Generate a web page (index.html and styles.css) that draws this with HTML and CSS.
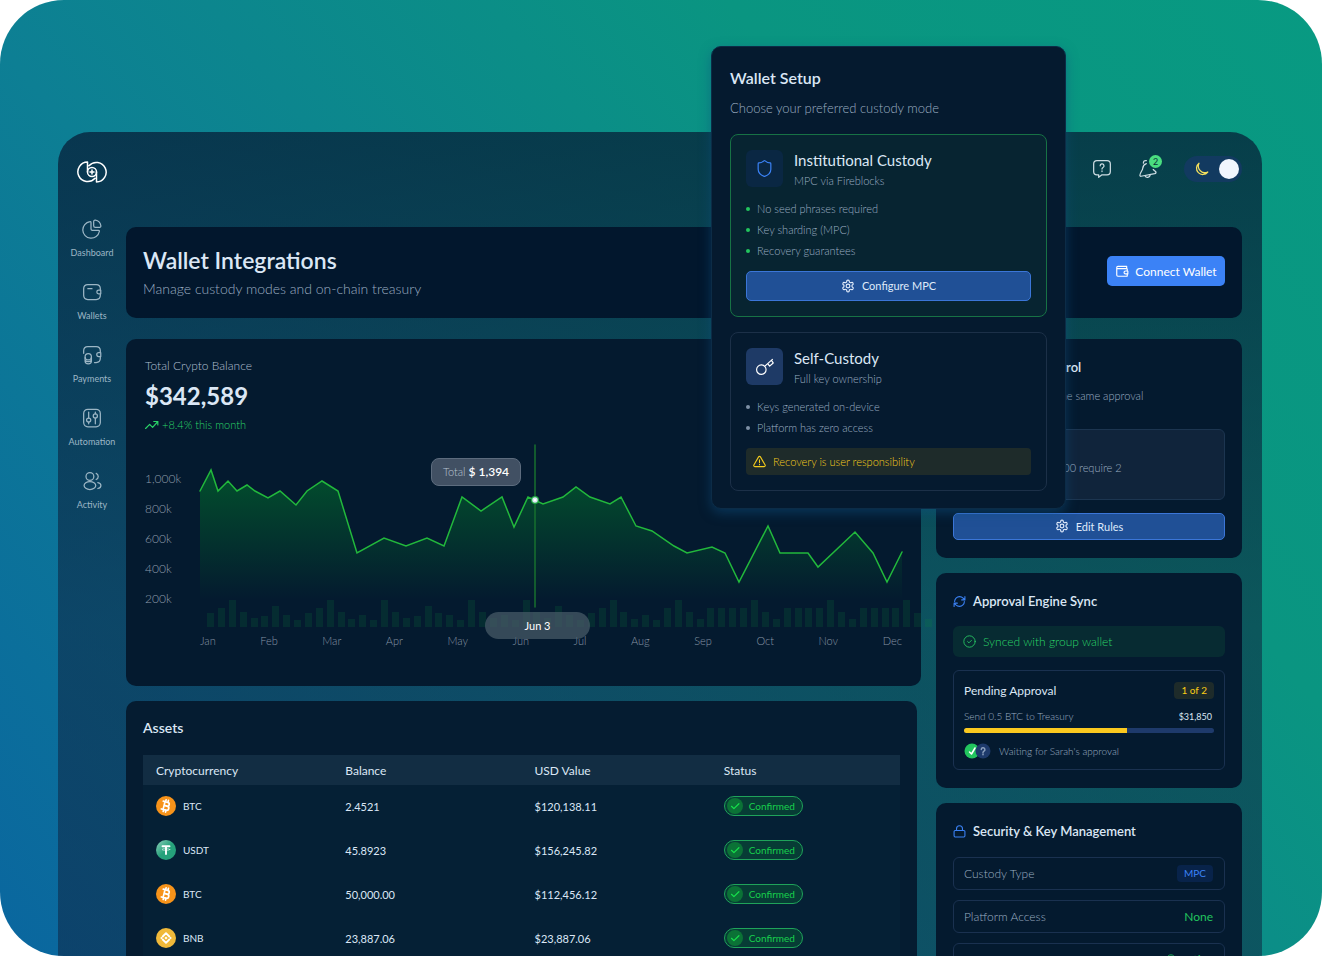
FILE: index.html
```html
<!DOCTYPE html>
<html lang="en">
<head>
    <meta charset="utf-8">
    <title>Wallet Integrations</title>
    <link rel="stylesheet" href="styles.css">
</head>
<body>
    <!-- shared icons -->
    <svg class="sprite" aria-hidden="true">
        <symbol id="gear" viewBox="0 0 24 24">
            <path d="M12.2 2h-.4a2 2 0 0 0-2 2v.2a2 2 0 0 1-1 1.7l-.4.3a2 2 0 0 1-2 0l-.2-.1a2 2 0 0 0-2.7.7l-.2.4a2 2 0 0 0 .7 2.7l.2.1a2 2 0 0 1 1 1.7v.5a2 2 0 0 1-1 1.8l-.2.1a2 2 0 0 0-.7 2.7l.2.4a2 2 0 0 0 2.7.7l.2-.1a2 2 0 0 1 2 0l.4.3a2 2 0 0 1 1 1.7v.2a2 2 0 0 0 2 2h.4a2 2 0 0 0 2-2v-.2a2 2 0 0 1 1-1.7l.4-.3a2 2 0 0 1 2 0l.2.1a2 2 0 0 0 2.7-.7l.2-.4a2 2 0 0 0-.7-2.7l-.2-.1a2 2 0 0 1-1-1.8v-.5a2 2 0 0 1 1-1.7l.2-.1a2 2 0 0 0 .7-2.7l-.2-.4a2 2 0 0 0-2.7-.7l-.2.1a2 2 0 0 1-2 0l-.4-.3a2 2 0 0 1-1-1.7V4a2 2 0 0 0-2-2z"/>
            <circle cx="12" cy="12" r="3.2"/>
        </symbol>
        <symbol id="shield" viewBox="0 0 24 24">
            <path d="M20 13c0 5-3.500 7.500-7.700 9a1 1 0 0 1-.6 0C7.500 20.500 4 18 4 13V6a1 1 0 0 1 1-1c2 0 4.500-1.200 6.200-2.700a1.200 1.200 0 0 1 1.600 0C14.500 3.800 17 5 19 5a1 1 0 0 1 1 1z"/>
        </symbol>
        <symbol id="btc" viewBox="0 0 20 20">
            <circle cx="10" cy="10" r="10" fill="#f7931a"/>
            <g transform="rotate(14 10 10)" fill="none" stroke="#fff" stroke-width="1.700">
                <path d="M6.200 6h4.600a1.950 1.950 0 0 1 0 3.900H8h3.200a2.050 2.050 0 0 1 0 4.100h-5M8 6v8M8.600 6V4M11 6V4M8.600 14v2M11 14v2"/>
            </g>
        </symbol>
        <symbol id="usdt" viewBox="0 0 20 20">
            <circle cx="10" cy="10" r="10" fill="url(#tetherFill)"/>
            <path d="M6.500 6.300h7M10 6.300V14" fill="none" stroke="#fff" stroke-width="1.900"/>
            <ellipse cx="10" cy="9.500" rx="4" ry=".9" fill="none" stroke="#fff" stroke-width=".5"/>
        </symbol>
        <symbol id="bnb" viewBox="0 0 20 20">
            <circle cx="10" cy="10" r="10" fill="#f0b93a"/>
            <path d="M6.700 8.500 10 5.200l3.300 3.300M6.700 11.500l3.300 3.300 3.300-3.300" fill="none" stroke="#fff" stroke-width="1.800"/>
            <path d="m10 8.400 1.600 1.600-1.600 1.600L8.400 10zM5.400 8.800 6.600 10l-1.200 1.200L4.200 10zM14.600 8.800l1.200 1.200-1.200 1.200-1.200-1.200z" fill="#fff"/>
        </symbol>
        <symbol id="tick" viewBox="0 0 16 16">
            <circle cx="8" cy="8" r="8" fill="#0b7236"/>
            <path d="m4.500 8.300 2.400 2.300 5-4.900" fill="none" stroke="#17e04c" stroke-width="1.200"/>
        </symbol>
        <defs>
            <linearGradient id="tetherFill" x1="0" y1="0" x2="1" y2="1">
                <stop offset="0" stop-color="#8fd0bc"/>
                <stop offset=".5" stop-color="#26a17b"/>
            </linearGradient>
        </defs>
    </svg>

    <div class="stage">
        <div class="window">
            <!-- sidebar -->
            <nav class="sidebar">
                <a class="logo" href="#" aria-label="Home">
                    <svg viewBox="0 0 30 22">
                        <path d="M10.500 1A9.800 9.800 0 1 0 18 17.300M10.500 1v10M19.500 21A9.800 9.800 0 1 0 12 4.700M19.500 21V11"/>
                        <circle cx="15" cy="11" r="4.500"/>
                        <path d="M15 9v4M13 11h4"/>
                    </svg>
                </a>
                <a class="nav-item" href="#">
                    <svg viewBox="0 0 24 24"><path d="M9.500 3.200A10 10 0 1 0 20.800 15c.3-.9-.2-1.400-1-1.400h-7.300c-1 0-1.700-.7-1.700-1.700V4.400c0-.9-.5-1.400-1.300-1.200z"/><path d="M14 3v5c0 1.300.7 2 2 2h5c1.200 0 1.800-.8 1.600-2A8 8 0 0 0 16 1.400c-1.200-.2-2 .4-2 1.600z"/></svg>
                    Dashboard
                </a>
                <a class="nav-item" href="#">
                    <svg viewBox="0 0 24 24"><path d="M22 9V8c0-3-2-5-5-5H7C4 3 2 5 2 8v8c0 3 2 5 5 5h10c3 0 5-2 5-5v-1M7 8h5M22.500 9.800H20a2.200 2.200 0 0 0 0 4.400h2.500z"/></svg>
                    Wallets
                </a>
                <a class="nav-item" href="#">
                    <svg viewBox="0 0 24 24"><path d="M22 9V7c0-3-2-5-5-5H7C4 2 2 4 2 7v3M22 14v2c0 3-2 5-5 5h-2M22.500 9.200H20a2.200 2.200 0 0 0 0 4.600h2.500z"/><circle cx="7.500" cy="14" r="3.800"/><path d="M3.700 15v4.500c0 1.700 1.700 3 3.800 3s3.800-1.300 3.800-3V15M4 18.500c1.500 2 5.500 2 7 0"/></svg>
                    Payments
                </a>
                <a class="nav-item" href="#">
                    <svg viewBox="0 0 24 24"><rect x="2" y="1.500" width="20" height="21" rx="5"/><path d="M8 5v7M8 17v2M16 5v2M16 12v7"/><circle cx="8" cy="14.500" r="2.500"/><circle cx="16" cy="9.500" r="2.500"/></svg>
                    Automation
                </a>
                <a class="nav-item" href="#">
                    <svg viewBox="0 0 24 24"><circle cx="9.500" cy="6.500" r="4.700"/><ellipse cx="9.500" cy="17.500" rx="7" ry="4.700"/><path d="M17 2.800a4 4 0 0 1 0 7.400M19 14c2.200.4 3.700 1.800 3.700 3.400S21.200 20.600 19 21"/></svg>
                    Activity
                </a>
            </nav>

            <main class="main">
                <!-- top bar -->
                <header class="topbar">
                    <button class="icon-button" aria-label="Help">
                        <svg viewBox="0 0 24 24"><path d="M6 2h12a4 4 0 0 1 4 4v9a4 4 0 0 1-4 4h-6l-4 3v-3H6a4 4 0 0 1-4-4V6a4 4 0 0 1 4-4z"/><path d="M9.800 8.200a2.300 2.300 0 1 1 3.400 2c-.8.5-1.200.9-1.200 1.800M12 14.300v.7"/></svg>
                    </button>
                    <button class="icon-button" aria-label="Notifications">
                        <svg viewBox="0 0 24 24"><path d="M10 5.500c-2.700.8-4 3-4.300 5.500-.2 3-3 4.500-3.400 8.500 0 1 .5 1.300 1.400 1.200L20 17.500c1.500-.4 2-1.300 1.300-2.200-1-1.200-2.300-1.500-3-2.800M6.500 5c-.3-2.300 1.500-3.500 3.500-3M8.500 20c1.200 3 5.800 2.500 6.300-1.200"/></svg>
                        <span class="badge">2</span>
                    </button>
                    <label class="theme-switch">
                        <input type="checkbox" checked aria-label="Dark theme">
                        <svg viewBox="0 0 24 24"><path d="M8 2A10 10 0 1 0 22 16 10.500 10.500 0 0 1 8 2z"/></svg>
                        <span class="knob"></span>
                    </label>
                </header>

                <section class="card page-head">
                    <div>
                        <h1>Wallet Integrations</h1>
                        <p>Manage custody modes and on-chain treasury</p>
                    </div>
                    <button class="connect">
                        <svg viewBox="0 0 24 24"><path d="M20 8V4H5a2 2 0 0 0-2 2v13a2 2 0 0 0 2 2h15a1 1 0 0 0 1-1v-3M3 7a1 1 0 0 0 1 1h16a1 1 0 0 1 1 1v3M22 12h-4a2.500 2.500 0 0 0 0 5h4z"/></svg>
                        Connect Wallet
                    </button>
                </section>

                <div class="columns">
                    <div class="left">
                        <!-- balance chart -->
                        <section class="card balance">
                            <p class="balance-label">Total Crypto Balance</p>
                            <p class="balance-value">$342,589</p>
                            <p class="balance-change">
                                <svg viewBox="0 0 24 16"><path d="m1 14 7-7 5 5 9-10M15 2h7v6"/></svg>
                                +8.4% this month
                            </p>
                            <div class="chart">
                                <div class="y-axis">
                                    <span>1,000k</span>
                                    <span>800k</span>
                                    <span>600k</span>
                                    <span>400k</span>
                                    <span>200k</span>
                                </div>
                                <div class="plot">
                                    <svg class="graph" viewBox="0 0 702 187" preserveAspectRatio="none">
                                        <defs>
                                            <linearGradient id="area" x1="0" y1="0" x2="0" y2="1">
                                                <stop offset="0" stop-color="#00852a" stop-opacity=".5"/>
                                                <stop offset="1" stop-color="#00852a" stop-opacity="0"/>
                                            </linearGradient>
                                        </defs>
                                        <path class="area" id="fill"/>
                                        <path class="line" id="line"/>
                                        <g class="bars" id="bars"></g>
                                        <path class="cursor" d="M335 5v162"/>
                                        <circle class="halo" cx="335" cy="60" r="4"/>
                                        <circle cx="335" cy="60" r="2" fill="#fff"/>
                                    </svg>
                                    <div class="total-tip">Total <b>$ 1,394</b></div>
                                    <div class="date-tip">Jun 3</div>
                                    <div class="x-axis">
                                        <span>Jan</span><span>Feb</span><span>Mar</span><span>Apr</span><span>May</span><span>Jun</span><span>Jul</span><span>Aug</span><span>Sep</span><span>Oct</span><span>Nov</span><span>Dec</span>
                                    </div>
                                </div>
                            </div>
                        </section>

                        <!-- assets -->
                        <section class="card assets">
                            <h2>Assets</h2>
                            <table>
                                <thead>
                                    <tr><th>Cryptocurrency</th><th>Balance</th><th>USD Value</th><th>Status</th></tr>
                                </thead>
                                <tbody>
                                    <tr>
                                        <td><span class="coin"><svg><use href="#btc"/></svg>BTC</span></td>
                                        <td>2.4521</td><td>$120,138.11</td>
                                        <td><span class="status"><svg><use href="#tick"/></svg>Confirmed</span></td>
                                    </tr>
                                    <tr>
                                        <td><span class="coin"><svg><use href="#usdt"/></svg>USDT</span></td>
                                        <td>45.8923</td><td>$156,245.82</td>
                                        <td><span class="status"><svg><use href="#tick"/></svg>Confirmed</span></td>
                                    </tr>
                                    <tr>
                                        <td><span class="coin"><svg><use href="#btc"/></svg>BTC</span></td>
                                        <td>50,000.00</td><td>$112,456.12</td>
                                        <td><span class="status"><svg><use href="#tick"/></svg>Confirmed</span></td>
                                    </tr>
                                    <tr>
                                        <td><span class="coin"><svg><use href="#bnb"/></svg>BNB</span></td>
                                        <td>23,887.06</td><td>$23,887.06</td>
                                        <td><span class="status"><svg><use href="#tick"/></svg>Confirmed</span></td>
                                    </tr>
                                </tbody>
                            </table>
                        </section>
                    </div>

                    <div class="right">
                        <section class="card side control">
                            <h2><svg viewBox="0 0 24 24"><use href="#shield"/></svg>Multi-User Control</h2>
                            <p class="control-text">New wallets here use the same approval</p>
                            <div class="rule">Transfers over $10,000 require 2</div>
                            <button class="action"><svg><use href="#gear"/></svg>Edit Rules</button>
                        </section>

                        <section class="card side">
                            <h2><svg viewBox="0 0 24 24"><path d="M3 12a9 9 0 0 1 9-9 9.800 9.800 0 0 1 6.700 2.700L22 9M22 3v6h-6M21 12a9 9 0 0 1-9 9 9.800 9.800 0 0 1-6.700-2.700L2 15M8 15H2v6"/></svg>Approval Engine Sync</h2>
                            <p class="synced">
                                <svg viewBox="0 0 24 24"><circle cx="12" cy="12" r="10.500"/><path d="m8.500 12 2.500 2.500 4.500-4.500"/></svg>
                                Synced with group wallet
                            </p>
                            <div class="pending">
                                <div class="row"><span class="pending-title">Pending Approval</span><span class="tag yellow">1 of 2</span></div>
                                <div class="row small"><span>Send 0.5 BTC to Treasury</span><span class="amount">$31,850</span></div>
                                <div class="progress"><div class="progress-value"></div></div>
                                <div class="waiting">
                                    <svg viewBox="0 0 27 16"><circle cx="8" cy="8" r="7.500" fill="#22c55e"/><circle cx="19" cy="8" r="7.500" fill="#1e3a6b"/><path d="m5.500 9 2 2 3.500-6" stroke="#fff" stroke-width="1.500"/><path d="M17.300 6.600a1.800 1.800 0 1 1 2.700 1.500c-.7.4-1 .7-1 1.400M19 11v.8" stroke="#8ca0bd"/></svg>
                                    Waiting for Sarah's approval
                                </div>
                            </div>
                        </section>

                        <section class="card side">
                            <h2><svg viewBox="0 0 24 24"><rect x="2" y="10" width="20" height="12" rx="2"/><path d="M6.500 10V7a5.500 5.500 0 0 1 11 0v3"/></svg>Security &amp; Key Management</h2>
                            <div class="setting"><span>Custody Type</span><span class="tag blue">MPC</span></div>
                            <div class="setting"><span>Platform Access</span><span class="green">None</span></div>
                            <div class="setting"><span>Recovery Status</span><span class="green"><svg viewBox="0 0 24 24"><circle cx="12" cy="12" r="10"/><path d="m8 12 3 3 5-5"/></svg>Active</span></div>
                        </section>
                    </div>
                </div>
            </main>
        </div>

        <!-- wallet setup dialog -->
        <section class="dialog" role="dialog" aria-label="Wallet Setup">
            <h2>Wallet Setup</h2>
            <p class="dialog-text">Choose your preferred custody mode</p>

            <div class="option institutional">
                <div class="option-head">
                    <span class="option-icon"><svg><use href="#shield"/></svg></span>
                    <div><h3>Institutional Custody</h3><p>MPC via Fireblocks</p></div>
                </div>
                <ul>
                    <li>No seed phrases required</li>
                    <li>Key sharding (MPC)</li>
                    <li>Recovery guarantees</li>
                </ul>
                <button class="action"><svg><use href="#gear"/></svg>Configure MPC</button>
            </div>

            <div class="option self">
                <div class="option-head">
                    <span class="option-icon"><svg viewBox="0 0 24 24"><circle cx="8" cy="16" r="6"/><path d="M12.500 11.500 22 3M16 8.500l2.500 3 4.500-4-2-3"/></svg></span>
                    <div><h3>Self-Custody</h3><p>Full key ownership</p></div>
                </div>
                <ul>
                    <li>Keys generated on-device</li>
                    <li>Platform has zero access</li>
                </ul>
                <p class="warning">
                    <svg viewBox="0 0 24 24"><path d="M10.300 3.500 1.600 18.500A2 2 0 0 0 3.300 21.500h17.400a2 2 0 0 0 1.700-3L13.700 3.500a2 2 0 0 0-3.400 0zM12 9v5M12 17v1"/></svg>
                    Recovery is user responsibility
                </p>
            </div>
        </section>
    </div>

    <script>
    // Balance over the year, as x,y pairs in the graph
    let points = [
        [0,51],[11,30],[18,51],[28,41],[37,51],[47,45],[55,51],[68,58],[80,51],[96,65],
        [107,51],[122,41],[138,51],[157,113],[184,98],[206,106],[227,98],[244,106],
        [262,57],[281,71],[302,57],[314,87],[328,57],[343,64],[363,57],[376,47],[390,57],
        [410,64],[421,57],[436,86],[452,91],[474,106],[487,113],[512,107],[525,113],
        [539,142],[568,86],[580,113],[608,113],[618,127],[655,92],[673,113],[687,142],[702,112]
    ];
    // Heights of the volume bars
    let volumes = [
        14,19,27,15,9,11,21,12,7,14,19,27,15,8,12,7,27,15,9,11,21,14,12,7,27,15,9,
        12,7,27,15,9,21,12,7,14,19,27,15,8,12,7,19,27,15,8,19,19,19,19,27,15,8,
        19,19,19,19,27,15,8,19,19,19,19,27,14,8
    ];

    let line = "M" + points.join("L");
    document.getElementById("line").setAttribute("d", line);
    document.getElementById("fill").setAttribute("d", line + "V160H0Z");

    let bars = "";
    volumes.forEach(function (h, i) {
        bars += '<rect x="' + Math.round(7 + i * 10.880) + '" y="' + (187 - h) + '" width="7" height="' + h + '"/>';
    });
    document.getElementById("bars").innerHTML = bars;
    </script>
</body>
</html>
```

FILE: styles.css
```css
* {
    box-sizing: border-box;
}
body {
    margin: 0;
    background: #fff;
    font-family: Lato, "Liberation Sans", sans-serif;
    font-size: 12px;
    font-weight: 300;
    color: #dbe7f5;
}
h1, h2, h3, p, ul {
    margin: 0;
    padding: 0;
}
h1, h2, h3 {
    font-weight: 600;
}
button {
    font: inherit;
    color: inherit;
    border: 0;
    padding: 0;
    background: none;
}
a {
    color: inherit;
    text-decoration: none;
}
svg {
    fill: none;
    stroke: currentColor;
    stroke-width: 1.5;
    stroke-linecap: round;
    stroke-linejoin: round;
    flex: none;
}
.sprite {
    position: absolute;
    width: 0;
    height: 0;
}

/* Page background and app window */
.stage {
    position: relative;
    height: 100vh;
    overflow: hidden;
    padding: 132px 60px 0 58px;
    border-radius: 64px;
    background: linear-gradient(50deg, #0a669f 0%, #0d7f94 36%, #0a9581 72%, #089a82 100%);
}
.window {
    display: flex;
    height: 100%;
    overflow: hidden;
    border-radius: 32px 32px 0 0;
    background: linear-gradient(180deg, rgba(6, 24, 50, .7), rgba(14, 30, 58, .52) 60%, rgba(14, 30, 58, .5));
}
.card {
    background: #041a2f;
    border-radius: 10px;
}

/* Sidebar */
.sidebar {
    display: flex;
    flex-direction: column;
    align-items: center;
    flex: none;
    width: 68px;
    padding-top: 29px;
}
.logo {
    height: 58px;
    color: #fff;
}
.logo svg {
    width: 30px;
    height: 22px;
}
.nav-item {
    display: flex;
    flex-direction: column;
    align-items: center;
    gap: 8px;
    height: 63px;
    font-size: 9px;
    line-height: 12px;
    font-weight: 400;
    color: #9cb6c5;
}
.nav-item svg {
    width: 20px;
    height: 20px;
}

/* Top bar */
.main {
    flex: 1;
    min-width: 0;
    padding-right: 20px;
}
.topbar {
    display: flex;
    justify-content: flex-end;
    align-items: center;
    gap: 26px;
    height: 95px;
    padding-bottom: 21px;
}
.icon-button {
    position: relative;
    width: 20px;
    height: 20px;
    color: #cddce2;
}
.icon-button svg {
    display: block;
    width: 20px;
    height: 20px;
}
.badge {
    position: absolute;
    top: -4px;
    right: -4px;
    width: 13px;
    height: 13px;
    border-radius: 50%;
    background: #4ade80;
    box-shadow: 0 0 0 1px #07404a;
    color: #06303a;
    font-size: 9px;
    line-height: 13px;
    font-weight: 400;
}
.theme-switch {
    display: flex;
    align-items: center;
    justify-content: space-between;
    width: 58px;
    height: 26px;
    padding: 0 3px 0 10px;
    border-radius: 13px;
    background: #123a60;
    color: #f5e05c;
}
.theme-switch input {
    position: absolute;
    opacity: 0;
}
.theme-switch svg {
    width: 15px;
    height: 15px;
    stroke-width: 2;
}
.knob {
    width: 20px;
    height: 20px;
    border-radius: 50%;
    background: #f1f6fe;
}

/* Page heading */
.page-head {
    display: flex;
    align-items: center;
    justify-content: space-between;
    height: 91px;
    padding: 0 17px 3px;
    background: #02172d;
}
.page-head h1 {
    font-size: 23px;
    line-height: 32px;
}
.page-head p {
    margin-top: 3px;
    font-size: 14px;
    line-height: 20px;
    color: #9badc1;
}
.connect {
    display: flex;
    align-items: center;
    justify-content: center;
    gap: 6px;
    width: 118px;
    height: 30px;
    border-radius: 5px;
    background: #3b82f6;
    font-weight: 400;
    color: #fff;
}
.connect svg {
    width: 14px;
    height: 14px;
    stroke-width: 2;
}

/* Columns */
.columns {
    display: grid;
    grid-template-columns: minmax(0, 1fr) 306px;
    gap: 15px;
    margin-top: 21px;
}
.left, .right {
    display: flex;
    flex-direction: column;
    gap: 15px;
}

/* Balance chart */
.balance {
    height: 347px;
    padding: 18px 19px 0 19px;
}
.balance-label {
    line-height: 18px;
    color: #b0bfd0;
}
.balance-value {
    margin-top: 5px;
    font-size: 24px;
    line-height: 32px;
    font-weight: 700;
}
.balance-change {
    display: flex;
    align-items: center;
    gap: 3px;
    margin-top: 5px;
    font-size: 11px;
    line-height: 16px;
    color: #2ad468;
}
.balance-change svg {
    width: 14px;
    height: 10px;
    stroke-width: 2;
}
.chart {
    display: flex;
    margin-top: 7px;
}
.y-axis {
    display: flex;
    flex-direction: column;
    gap: 14px;
    flex: none;
    width: 55px;
    padding-top: 31px;
    line-height: 16px;
    color: #8f9dab;
}
.plot {
    position: relative;
    flex: 1;
}
.graph {
    display: block;
    width: 100%;
    height: 187px;
    overflow: visible;
}
.area {
    fill: url(#area);
    stroke: none;
}
.line {
    stroke: #22b83c;
    stroke-linejoin: miter;
}
.bars {
    fill: #0a8a3a;
    fill-opacity: .17;
    stroke: none;
}
.cursor {
    stroke: #17702f;
}
.halo {
    fill: #22a845;
    stroke: none;
}
.total-tip, .date-tip {
    position: absolute;
    text-align: center;
}
.total-tip {
    top: 18px;
    left: 231px;
    width: 90px;
    border: 1px solid #5d6c7e;
    border-radius: 8px;
    background: rgba(72, 87, 105, .9);
    font-size: 11px;
    line-height: 26px;
    color: #b9c4d0;
}
.total-tip b {
    font-size: 12px;
    font-weight: 600;
    color: #fff;
}
.date-tip {
    top: 172px;
    left: 285px;
    width: 105px;
    border-radius: 14px;
    background: rgba(72, 92, 104, .72);
    font-size: 11px;
    line-height: 27px;
    font-weight: 400;
    color: #fff;
}
.x-axis {
    display: flex;
    justify-content: space-between;
    margin-top: 7px;
    font-size: 11px;
    line-height: 14px;
    color: #8594a4;
}

/* Assets */
.assets {
    margin-right: 4px;
    padding: 17px;
    background: #051c31;
}
.assets h2 {
    font-size: 14px;
    line-height: 20px;
}
table {
    width: 100%;
    margin-top: 17px;
    table-layout: fixed;
    border-collapse: collapse;
    background: #052035;
}
th, td {
    padding: 0 0 0 13px;
    text-align: left;
    font-weight: 400;
}
th {
    height: 30px;
    background: #122d43;
}
td {
    height: 44px;
    padding-bottom: 2px;
    font-size: 11px;
}
.coin {
    display: flex;
    align-items: center;
    gap: 7px;
    font-size: 10px;
}
.coin svg {
    width: 20px;
    height: 20px;
    stroke: none;
}
.status {
    display: flex;
    align-items: center;
    gap: 6px;
    width: 79px;
    height: 20px;
    padding-left: 2px;
    border: 1px solid #1fa35a;
    border-radius: 10px;
    background: #073c35;
    font-size: 10px;
    color: #17d04c;
}
.status svg {
    width: 16px;
    height: 16px;
    stroke: none;
}

/* Right column */
.side {
    padding: 18px 17px;
}
.side h2 {
    display: flex;
    align-items: center;
    gap: 7px;
    font-size: 13px;
    line-height: 20px;
}
.side h2 svg {
    width: 13px;
    height: 13px;
    stroke-width: 2;
    color: #3b82f6;
}
.control-text {
    margin-top: 11px;
    font-size: 11px;
    line-height: 16px;
    color: #9badc1;
}
.rule {
    height: 71px;
    margin: 25px 0 13px;
    padding: 30px 12px 0;
    border: 1px solid #1c3550;
    border-radius: 6px;
    background: #10243b;
    font-size: 11px;
    line-height: 16px;
    color: #9badc1;
}
.action {
    display: flex;
    align-items: center;
    justify-content: center;
    gap: 7px;
    width: 100%;
    height: 27px;
    padding-bottom: 1px;
    border: 1px solid #3b76d8;
    border-radius: 5px;
    background: #205096;
    font-size: 11px;
    font-weight: 400;
    color: #dfeafa;
}
.action svg {
    width: 14px;
    height: 14px;
    stroke-width: 2;
}
.synced {
    display: flex;
    align-items: center;
    gap: 7px;
    height: 31px;
    margin-top: 15px;
    padding: 0 0 1px 10px;
    border-radius: 6px;
    background: #072b32;
    color: #2ad468;
}
.synced svg {
    width: 13px;
    height: 13px;
}
.pending {
    margin-top: 13px;
    padding: 10px;
    border: 1px solid #1a3150;
    border-radius: 6px;
}
.row {
    display: flex;
    align-items: center;
    justify-content: space-between;
    height: 18px;
}
.pending-title {
    font-weight: 400;
}
.small {
    height: 16px;
    margin-top: 9px;
    padding-right: 2px;
    font-size: 10px;
    color: #9badc1;
}
.amount {
    font-size: 9px;
    font-weight: 400;
    color: #dbe7f5;
}
.tag {
    padding: 0 7px;
    border-radius: 4px;
    font-size: 10px;
    line-height: 17px;
    font-weight: 400;
}
.yellow {
    background: #1e2b2a;
    color: #facc15;
}
.blue {
    background: #08234a;
    color: #3b82f6;
}
.progress {
    height: 5px;
    margin-top: 4px;
    border-radius: 3px;
    background: #1e3a6b;
    overflow: hidden;
}
.progress-value {
    width: 65%;
    height: 100%;
    background: #fbc91f;
}
.waiting {
    display: flex;
    align-items: center;
    gap: 8px;
    height: 16px;
    margin-top: 10px;
    font-size: 10px;
    color: #9badc1;
}
.waiting svg {
    width: 27px;
    height: 16px;
    stroke: none;
}
.setting {
    display: flex;
    align-items: center;
    justify-content: space-between;
    height: 33px;
    margin-top: 10px;
    padding: 0 11px 1px 10px;
    border: 1px solid #1a3150;
    border-radius: 6px;
    color: #9badc1;
}
h2 + .setting {
    margin-top: 16px;
}
.green {
    font-weight: 400;
    color: #22c55e;
}
.green svg {
    width: 10px;
    height: 10px;
    margin-right: 4px;
    stroke-width: 2;
}

/* Wallet setup dialog */
.dialog {
    position: absolute;
    top: 46px;
    right: 256px;
    width: 355px;
    padding: 20px 18px 17px;
    border: 1px solid #0c2c47;
    border-radius: 10px;
    background: #051a2f;
    box-shadow: 0 4px 12px rgba(13, 79, 130, .5);
}
.dialog h2 {
    font-size: 16px;
    line-height: 22px;
}
.dialog-text {
    margin: 10px 0 17px;
    font-size: 13px;
    line-height: 18px;
    color: #9badc1;
}
.option {
    margin-top: 15px;
    padding: 15px;
    border: 1px solid #1c3048;
    border-radius: 8px;
}
.institutional {
    border-color: #177245;
    background: #072431;
}
.option-head {
    display: flex;
    gap: 11px;
}
.option-icon {
    display: flex;
    align-items: center;
    justify-content: center;
    width: 37px;
    height: 37px;
    border-radius: 6px;
    background: #0a2743;
    color: #3b82f6;
}
.option-icon svg {
    width: 19px;
    height: 19px;
}
.self .option-icon {
    background: #1e3a66;
    color: #fff;
}
.option h3 {
    font-size: 15px;
    line-height: 20px;
    font-weight: 400;
}
.option-head p {
    margin-top: 4px;
    font-size: 11px;
    line-height: 14px;
    color: #9badc1;
}
.option ul {
    display: grid;
    gap: 5px;
    margin-top: 13px;
    list-style: none;
}
.option li {
    display: flex;
    align-items: center;
    gap: 7px;
    font-size: 11px;
    line-height: 16px;
    color: #9badc1;
}
.option li::before {
    content: "";
    width: 4px;
    height: 4px;
    border-radius: 50%;
    background: #7f90a6;
}
.institutional li::before {
    background: #22c55e;
}
.option .action {
    height: 30px;
    margin-top: 12px;
}
.warning {
    display: flex;
    align-items: center;
    gap: 7px;
    height: 27px;
    margin-top: 12px;
    padding-left: 7px;
    border-radius: 4px;
    background: #1e2b2a;
    font-size: 11px;
    color: #f5cc1c;
}
.warning svg {
    width: 13px;
    height: 13px;
    stroke-width: 2;
}
```
